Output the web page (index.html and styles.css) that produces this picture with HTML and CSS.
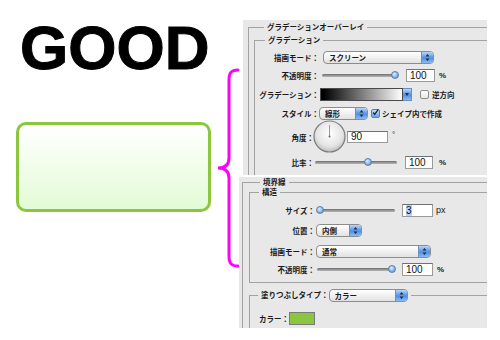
FILE: index.html
```html
<!DOCTYPE html>
<html lang="ja">
<head>
  <meta charset="UTF-8" />
  <title>グラデーションオーバーレイ</title>
  <link rel="stylesheet" href="styles.css">
</head>
<body>
  <div class="page">
    <div class="sample">
      <h1 class="good">GOOD</h1>
      <div class="sample-box"></div>
    </div>

    <div class="brace">
      <svg width="27" height="208" viewBox="0 0 27 208">
        <path d="M22,6 C15,6 13,9 13,16 L13,94 C13,101 9,104 2,104 C9,104 13,107 13,114 L13,192 C13,199 15,202 22,202" />
      </svg>
    </div>

    <div class="panels">
      <!-- gradient overlay dialog -->
      <div class="panel panel-top">
        <fieldset class="group">
          <legend>グラデーションオーバーレイ</legend>
          <fieldset class="group sub">
            <legend>グラデーション</legend>

            <div class="row r1">
              <span class="label">描画モード：</span>
              <div class="select ml4" style="width:111px"><span class="val">スクリーン</span><span class="step"><svg width="11" height="11" viewBox="0 0 11 11"><path d="M3.5,4.5 L5.5,2 L7.5,4.5 Z M3.5,6.5 L5.5,9 L7.5,6.5 Z" /></svg></span></div>
            </div>

            <div class="row r2">
              <span class="label">不透明度：</span>
              <div class="slider ml3" style="width:76px"><span class="track"></span><span class="thumb" style="left:96%"></span></div>
              <span class="field ml8" style="width:29px">100</span>
              <span class="unit ml4">%</span>
            </div>

            <div class="row r3">
              <span class="label">グラデーション：</span>
              <span class="gbar ml1"></span>
              <span class="gdrop"><svg width="8" height="12" viewBox="0 0 8 12"><path d="M2,5 L6,5 L4,8 Z" /></svg></span>
              <span class="check ml8"></span>
              <span class="text ml3">逆方向</span>
            </div>

            <div class="row r4">
              <span class="label">スタイル：</span>
              <div class="select" style="width:49px"><span class="val">線形</span><span class="step"><svg width="11" height="11" viewBox="0 0 11 11"><path d="M3.5,4.5 L5.5,2 L7.5,4.5 Z M3.5,6.5 L5.5,9 L7.5,6.5 Z" /></svg></span></div>
              <span class="check checked ml3"><svg width="9" height="9" viewBox="0 0 9 9"><path d="M1.5,4.5 L3.5,7 L8,0.5" /></svg></span>
              <span class="text ml2">シェイプ内で作成</span>
            </div>

            <div class="row r5 narrow">
              <span class="label">角度：</span>
              <span class="dial">
                <svg width="33" height="33" viewBox="0 0 33 33">
                  <defs>
                    <radialGradient id="dialFace" cx="50%" cy="40%" r="60%">
                      <stop offset="0" stop-color="#ffffff" />
                      <stop offset="0.7" stop-color="#e4e4e4" />
                      <stop offset="1" stop-color="#bcbcbc" />
                    </radialGradient>
                  </defs>
                  <circle cx="16.5" cy="16.5" r="15.5" fill="url(#dialFace)" stroke="#7e7e7e" stroke-width="1.2" />
                  <line x1="16.5" y1="16.5" x2="16.5" y2="5" stroke="#9a9a9a" stroke-width="1" />
                  <circle cx="16.5" cy="16.5" r="1" fill="#666" />
                </svg>
              </span>
              <span class="field ml1" style="width:41px">90</span>
              <span class="deg ml4">°</span>
            </div>

            <div class="row r6 narrow">
              <span class="label">比率：</span>
              <div class="slider ml1" style="width:82px"><span class="track"></span><span class="thumb" style="left:65%"></span></div>
              <span class="field ml8" style="width:28px">100</span>
              <span class="unit ml6">%</span>
            </div>
          </fieldset>
        </fieldset>
      </div>

      <!-- stroke dialog -->
      <div class="panel panel-bottom">
        <fieldset class="group">
          <legend class="wide">境界線</legend>
          <fieldset class="group sub">
            <legend class="near">構造</legend>

            <div class="row b1">
              <span class="label">サイズ：</span>
              <div class="slider ml2" style="width:78px"><span class="track"></span><span class="thumb" style="left:4%"></span></div>
              <span class="field ml7" style="width:31px"><span class="sel">3</span></span>
              <span class="px ml3">px</span>
            </div>

            <div class="row b2">
              <span class="label">位置：</span>
              <div class="select ml1" style="width:46px"><span class="val">内側</span><span class="step"><svg width="11" height="11" viewBox="0 0 11 11"><path d="M3.5,4.5 L5.5,2 L7.5,4.5 Z M3.5,6.5 L5.5,9 L7.5,6.5 Z" /></svg></span></div>
            </div>

            <div class="row b3">
              <span class="label">描画モード：</span>
              <div class="select ml1" style="width:115px"><span class="val">通常</span><span class="step"><svg width="11" height="11" viewBox="0 0 11 11"><path d="M3.5,4.5 L5.5,2 L7.5,4.5 Z M3.5,6.5 L5.5,9 L7.5,6.5 Z" /></svg></span></div>
            </div>

            <div class="row b4">
              <span class="label">不透明度：</span>
              <div class="slider ml2" style="width:78px"><span class="track"></span><span class="thumb" style="left:96%"></span></div>
              <span class="field ml7" style="width:31px">100</span>
              <span class="unit ml4">%</span>
            </div>
          </fieldset>

          <fieldset class="group sub fill">
            <legend class="fill-legend">
              <span>塗りつぶしタイプ：</span>
              <div class="select" style="width:79px"><span class="val">カラー</span><span class="step"><svg width="11" height="11" viewBox="0 0 11 11"><path d="M3.5,4.5 L5.5,2 L7.5,4.5 Z M3.5,6.5 L5.5,9 L7.5,6.5 Z" /></svg></span></div>
            </legend>
            <div class="row color-row">
              <span>カラー：</span>
              <span class="swatch"></span>
            </div>
          </fieldset>
        </fieldset>
      </div>
    </div>
  </div>
</body>
</html>
```

FILE: styles.css
```css
* {
  box-sizing: border-box;
  margin: 0;
  padding: 0;
}

body {
  background-color: #ffffff;
  font-family: "Noto Sans CJK JP", "Liberation Sans", sans-serif;
  color: #1a1a1a;
}

.page {
  display: flex;
  width: 500px;
  height: 340px;
  overflow: hidden;
}

/* Left: sample text and box */
.sample {
  width: 216px;
  padding-left: 16px;
  flex-shrink: 0;
}

.good {
  margin: 17px 0 0 4px;
  font-family: "Liberation Sans", Arial, sans-serif;
  font-size: 62px;
  line-height: 62px;
  font-weight: 900;
  color: #000;
  -webkit-text-stroke: 1px #000;
}

.sample-box {
  margin-top: 43px;
  width: 195px;
  height: 90px;
  border: 3px solid #8cc63f;
  border-radius: 10px;
  background: linear-gradient(#ffffff, #e3fbd6);
}

/* Magenta brace */
.brace {
  width: 27px;
  flex-shrink: 0;
  padding-top: 64px;
}

.brace path {
  fill: none;
  stroke: #ff00ff;
  stroke-width: 3;
  stroke-linecap: round;
}

/* Dialog screenshots */
.panels {
  display: flex;
  flex-direction: column;
}

.panel {
  background-color: #e8e8e8;
  overflow: hidden;
}

.panel-top {
  margin-top: 20px;
  width: 244px;
  height: 155px;
  padding: 3px 0 0 5px;
}

.panel-bottom {
  margin-top: 2px;
  margin-left: -4px;
  width: 248px;
  height: 151px;
  padding: 1px 0 0 3px;
}

fieldset.group {
  border: 1px solid #a2a2a2;
  min-width: 0;
  margin-right: -30px;
  padding: 5px 0 0 5px;
}

.panel-bottom fieldset.group {
  padding: 2px 0 0 6px;
}

fieldset.sub {
  margin-right: 0;
  padding: 4px 0 10px 0;
}

.panel-bottom fieldset.sub {
  margin-right: 0;
  padding: 5px 0 5px 0;
}

.panel-bottom fieldset.fill {
  margin-top: 5px;
  padding: 10px 0 12px 0;
}

legend {
  font-size: 7.5px;
  line-height: 8px;
  font-weight: bold;
  padding: 0 3px;
  margin-left: 10px;
}

legend.wide {
  margin-left: 11px;
}

legend.near {
  margin-left: 9px;
}

legend.fill-legend {
  display: flex;
  align-items: center;
  height: 14px;
  margin-left: 8px;
}

/* Rows */
.row {
  display: flex;
  align-items: center;
  font-size: 7.5px;
  font-weight: bold;
}

.label {
  width: 64px;
  flex-shrink: 0;
  text-align: right;
  white-space: nowrap;
}

.narrow .label {
  width: 59px;
}

.panel-bottom .label {
  width: 65px;
}

.r1 { height: 18px; }
.r2 { height: 18px; }
.r3 { height: 20px; }
.r4 { height: 18px; }
.r5 { height: 30px; }
.r6 { height: 20px; }

.b1 { height: 18px; }
.b2 { height: 22px; }
.b3 { height: 20px; }
.b4 { height: 16px; }

.color-row {
  height: 13px;
  padding-left: 9px;
}

.ml1 { margin-left: 1px; }
.ml2 { margin-left: 2px; }
.ml3 { margin-left: 3px; }
.ml4 { margin-left: 4px; }
.ml6 { margin-left: 6px; }
.ml7 { margin-left: 7px; }
.ml8 { margin-left: 8px; }

/* Popup menu */
.select {
  display: flex;
  height: 13px;
  border: 1px solid #8d8d8d;
  border-radius: 4px;
  background: linear-gradient(#ffffff, #e2e2e2);
  overflow: hidden;
  flex-shrink: 0;
}

.select .val {
  flex: 1;
  padding-left: 5px;
  font-size: 7.5px;
  line-height: 11px;
  font-weight: bold;
}

.select .step {
  width: 12px;
  border-left: 1px solid #6d8fbd;
  background: linear-gradient(#b7d6f7, #4e8fe4 55%, #8bbaf0);
  display: flex;
  align-items: center;
  justify-content: center;
}

.select .step path {
  fill: #1e2c44;
}

/* Slider */
.slider {
  position: relative;
  height: 10px;
  display: flex;
  align-items: center;
  flex-shrink: 0;
}

.slider .track {
  width: 100%;
  height: 3px;
  border-radius: 2px;
  background: linear-gradient(#6e6e6e, #b8b8b8);
}

.slider .thumb {
  position: absolute;
  top: 1px;
  width: 8px;
  height: 8px;
  margin-left: -4px;
  border-radius: 50%;
  border: 1px solid #5a7fae;
  background: radial-gradient(circle at 40% 35%, #e2efff, #7fb0ea 60%, #4a85d4);
}

/* Text field */
.field {
  display: block;
  height: 13px;
  flex-shrink: 0;
  background-color: #ffffff;
  border: 1px solid #9a9a9a;
  border-top-color: #707070;
  padding-left: 3px;
  font-family: "Liberation Sans", Arial, sans-serif;
  font-size: 10px;
  line-height: 11px;
  font-weight: normal;
  color: #111;
}

.r5 .field {
  height: 12px;
  line-height: 10px;
}

.field .sel {
  background-color: #b3d3fb;
}

.unit {
  font-family: "Liberation Sans", Arial, sans-serif;
  font-size: 8px;
  font-weight: bold;
}

.px {
  font-family: "Liberation Sans", Arial, sans-serif;
  font-size: 9px;
  font-weight: normal;
}

.deg {
  font-family: "Liberation Sans", Arial, sans-serif;
  font-size: 8px;
  font-weight: normal;
  align-self: flex-start;
  margin-top: 8px;
}

/* Gradient picker */
.gbar {
  width: 83px;
  height: 13px;
  border: 1px solid #4a4a4a;
  background: linear-gradient(to right, #000000 3%, #ffffff);
  flex-shrink: 0;
}

.gdrop {
  width: 9px;
  height: 13px;
  border: 1px solid #6d8fbd;
  border-left: none;
  background: linear-gradient(#b7d6f7, #4e8fe4 55%, #8bbaf0);
  display: flex;
  align-items: center;
  justify-content: center;
}

.gdrop path {
  fill: #1e2c44;
}

/* Checkbox */
.check {
  width: 9px;
  height: 9px;
  border: 1px solid #8d8d8d;
  border-radius: 2px;
  background: linear-gradient(#ffffff, #e6e6e6);
  flex-shrink: 0;
  display: flex;
}

.check.checked {
  border-color: #5c7fb0;
  background: linear-gradient(#c5ddf8, #6aa2e6);
  overflow: visible;
}

.check.checked svg {
  margin: -2px 0 0 0;
}

.check.checked path {
  fill: none;
  stroke: #1a2440;
  stroke-width: 1.6;
}

.text {
  white-space: nowrap;
}

/* Angle dial */
.dial {
  display: flex;
  width: 33px;
  height: 33px;
  margin: -2px 0 0 -1px;
  flex-shrink: 0;
}

.swatch {
  width: 26px;
  height: 13px;
  background-color: #8cc63f;
  border: 1px solid #7a7a7a;
}
```
